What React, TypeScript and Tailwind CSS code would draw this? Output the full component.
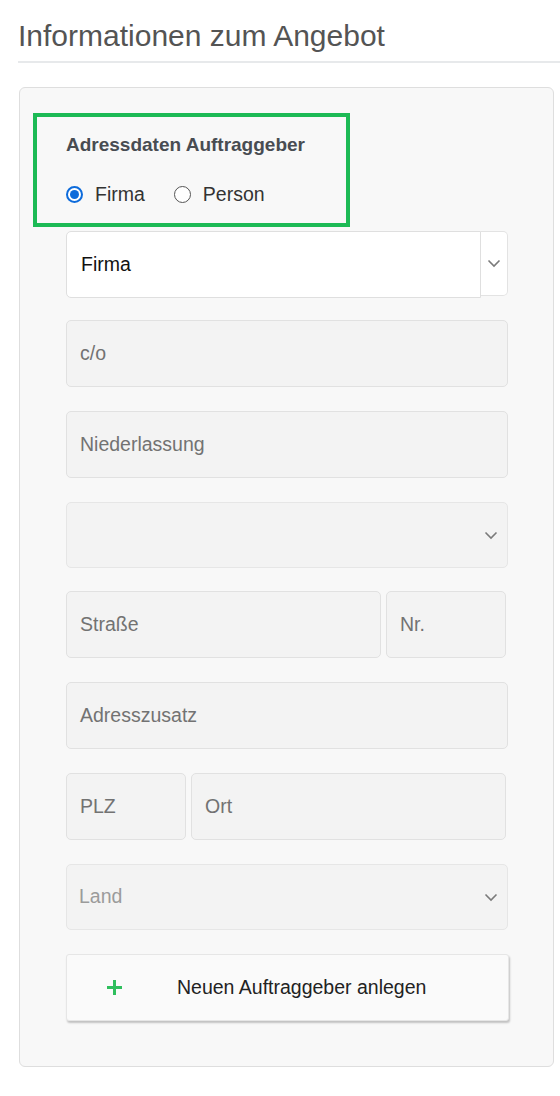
import React from "react";

const font = { fontFamily: '"Liberation Sans", Arial, sans-serif' };

function Chevron() {
  return (
    <svg width="14" height="9" viewBox="0 0 14 9" fill="none">
      <path d="M1.5 1.5 L7 7 L12.5 1.5" stroke="#7a7a7a" strokeWidth="1.6" />
    </svg>
  );
}

function Input({ label, className = "" }: { label: string; className?: string }) {
  return (
    <div
      className={`h-[67px] flex items-center pl-[13px] bg-[#f3f3f3] border border-[#e1e1e1] rounded-[5px] text-[19.5px] text-[#727272] ${className}`}
    >
      {label}
    </div>
  );
}

function GraySelect({ label }: { label?: string }) {
  return (
    <div className="h-[66px] flex items-center justify-between pl-[12px] pr-[9px] bg-[#f3f3f3] border border-[#e6e6e6] rounded-[5px] text-[19.5px] text-[#9b9b9b]">
      <span>{label ?? ""}</span>
      <Chevron />
    </div>
  );
}

export default function App() {
  return (
    <div className="bg-white min-h-[1096px] w-[560px] overflow-hidden" style={font}>
      <div className="pl-[18px] pt-[18px]">
        <div className="pb-[7px] border-b-2 border-[#e7e9eb] text-[30px] leading-[36px] text-[#545454]">
          Informationen zum Angebot
        </div>
        <div className="mt-[24px] ml-[1px] w-[535px] bg-[#f8f8f8] border border-[#dedede] rounded-[6px] pt-[25px] pb-[45px]">
          <div className="ml-[13px] w-[317px] h-[114px] border-4 border-[#1dba55] pl-[29px] pt-[16px]">
            <div className="text-[19px] font-bold text-[#484c52] leading-[24px]">Adressdaten Auftraggeber</div>
            <div className="mt-[25px] flex items-center text-[19.5px] text-[#333] leading-[24px]">
              <span className="w-[17px] h-[17px] rounded-full border-2 border-[#0d6bdb] bg-white flex items-center justify-center">
                <span className="w-[9px] h-[9px] rounded-full bg-[#0d6bdb]" />
              </span>
              <span className="ml-[12px]">Firma</span>
              <span className="ml-[29px] w-[17px] h-[17px] rounded-full border border-[#555] bg-white" />
              <span className="ml-[12px]">Person</span>
            </div>
          </div>

          <div className="pl-[46px] w-[488px] mt-[4px] flex flex-col">
            <div className="flex h-[67px]">
              <div className="flex-1 h-[67px] bg-white border border-[#dfdfdf] rounded-l-[5px] flex items-center pl-[14px] text-[19.5px] text-[#111]">
                Firma
              </div>
              <div className="w-[27px] h-[65px] bg-white border border-l-0 border-[#e3e3e3] rounded-r-[5px] flex items-center justify-center">
                <Chevron />
              </div>
            </div>
            <Input label="c/o" className="mt-[22px]" />
            <Input label="Niederlassung" className="mt-[24px]" />
            <div className="mt-[24px]">
              <GraySelect />
            </div>
            <div className="mt-[23px] flex gap-[5px] w-[440px]">
              <Input label="Straße" className="w-[315px]" />
              <Input label="Nr." className="w-[120px]" />
            </div>
            <Input label="Adresszusatz" className="mt-[24px]" />
            <div className="mt-[24px] flex gap-[5px] w-[440px]">
              <Input label="PLZ" className="w-[120px]" />
              <Input label="Ort" className="w-[315px]" />
            </div>
            <div className="mt-[24px]">
              <GraySelect label="Land" />
            </div>
            <div className="mt-[24px] h-[67px] w-[443px] bg-[#fafafa] border border-[#e6e6e6] rounded-[3px] shadow-[1px_2px_2px_rgba(0,0,0,0.22)] flex items-center">
              <svg className="ml-[39px]" width="17" height="17" viewBox="0 0 17 17">
                <path d="M8.5 1 V16 M1 8.5 H16" stroke="#2fbf5d" strokeWidth="3" />
              </svg>
              <span className="ml-[54px] text-[19.5px] text-[#222]">Neuen Auftraggeber anlegen</span>
            </div>
          </div>
        </div>
      </div>
    </div>
  );
}
